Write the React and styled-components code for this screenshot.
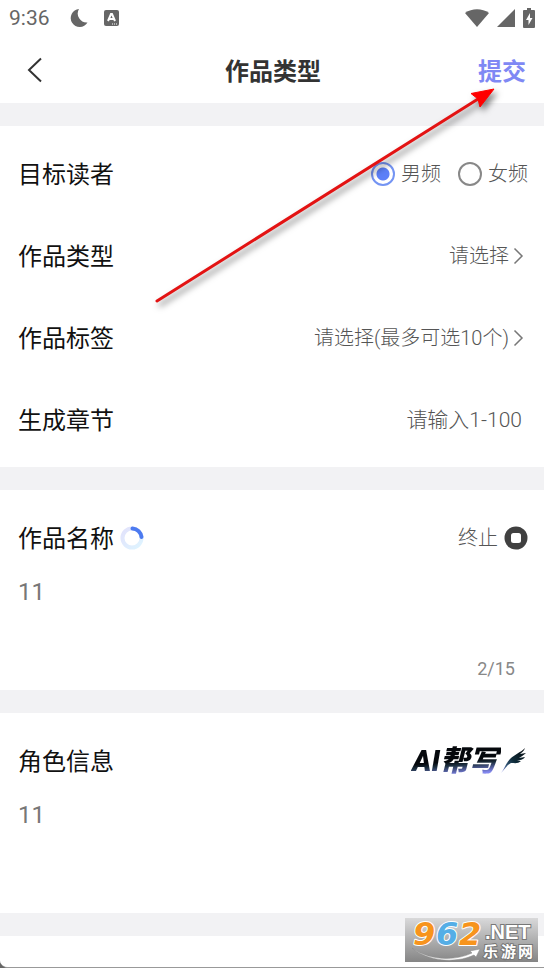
import React, { useState } from 'react';
import styled, { createGlobalStyle } from 'styled-components';

const GlobalStyle = createGlobalStyle`
  * {
    box-sizing: border-box;
  }

  body {
    margin: 0;
    background-color: #666;
    font-family: Roboto, 'Noto Sans CJK SC', sans-serif;
  }

  button, input, select, textarea {
    font-family: inherit;
    margin: 0;
    padding: 0;
    border: none;
    background: none;
    outline: none;
  }
`;

const Page = styled.div`
  position: relative;
  display: flex;
  flex-direction: column;
  min-height: 100vh;
  background-color: #f2f2f4;
  border-bottom: 1px solid #999;
  border-bottom-left-radius: 8px;
  overflow: hidden;
`;

const StatusBar = styled.div`
  display: flex;
  align-items: center;
  justify-content: space-between;
  height: 36px;
  padding: 0 9px;
  background-color: white;
  color: #666;
`;

const StatusGroup = styled.div`
  display: flex;
  align-items: center;
  gap: ${(props) => props.$gap}px;
`;

const Time = styled.span`
  font-size: 21px;
  line-height: 24px;
  margin-right: 4px;
`;

const NavBar = styled.header`
  display: grid;
  grid-template-columns: 1fr auto 1fr;
  align-items: center;
  height: 67px;
  padding: 0 18px 0 20px;
  background-color: white;
`;

const BackButton = styled.button`
  display: flex;
  justify-self: start;
  cursor: pointer;
`;

const Title = styled.h1`
  margin: 0;
  padding-top: 4px;
  font-size: 24px;
  line-height: 36px;
  font-weight: 700;
  color: #333;
`;

const SubmitButton = styled.button`
  justify-self: end;
  padding-top: 4px;
  font-size: 24px;
  line-height: 36px;
  font-weight: 700;
  color: #7f88f4;
  cursor: pointer;
`;

const Main = styled.main`
  display: flex;
  flex-direction: column;
  flex: 1;
  gap: 23px;
  padding-top: 23px;
`;

const Section = styled.section`
  padding: 7px 16px 6px 18px;
  background-color: white;
`;

const LastSection = styled(Section)`
  flex: 1;
`;

const Row = styled.div`
  display: flex;
  align-items: center;
  justify-content: space-between;
  height: 82px;
`;

const Label = styled.label`
  padding-top: 2px;
  font-size: 24px;
  line-height: 36px;
  color: #111;
`;

const LabelGroup = styled.div`
  display: flex;
  align-items: center;
  gap: 6px;
`;

const RadioGroup = styled.div`
  display: flex;
  gap: 17px;
`;

const RadioLabel = styled.label`
  display: flex;
  align-items: center;
  gap: 6px;
  font-size: 20px;
  line-height: 30px;
  font-weight: 300;
  color: #555;
`;

const Radio = styled.input`
  appearance: none;
  width: 24px;
  height: 24px;
  border: 2px solid #888;
  border-radius: 50%;

  &:checked {
    border-color: #7494f3;
    background: radial-gradient(circle closest-side, #5c80f8 6px, transparent 7px);
  }
`;

const SelectWrap = styled.div`
  display: flex;
  align-items: center;
  gap: 4px;
  padding-right: 4px;
  color: #555;
`;

const Select = styled.select`
  appearance: none;
  field-sizing: content;
  font-size: 20px;
  line-height: 30px;
  font-weight: 300;
  color: inherit;
  text-align: right;
`;

const ChapterInput = styled.input`
  flex: 1;
  min-width: 0;
  padding-right: 6px;
  font-size: 21px;
  line-height: 30px;
  font-weight: 300;
  text-align: right;
  color: #555;

  &::placeholder {
    color: #555;
  }
`;

const StopButton = styled.button`
  display: flex;
  align-items: center;
  gap: 6px;
  font-size: 20px;
  line-height: 30px;
  font-weight: 300;
  color: #555;
  cursor: pointer;
`;

const TextArea = styled.textarea`
  display: block;
  width: 100%;
  height: ${(props) => props.$height}px;
  font-size: 24px;
  line-height: 26px;
  color: #777;
  resize: none;
`;

const Counter = styled.div`
  padding: 1px 13px 2px 0;
  font-size: 18px;
  line-height: 26px;
  text-align: right;
  color: #888;
`;

const AiButton = styled.button`
  display: flex;
  align-items: center;
  padding-right: 2px;
  cursor: pointer;
`;

const AiText = styled.span`
  padding: 0 3px 0 1px;
  font-size: 29px;
  line-height: 36px;
  font-weight: 900;
  font-style: italic;
  background: linear-gradient(175deg, #05080c 50%, #1d3040 60%, #8488f0 82%);
  background-clip: text;
  color: transparent;
`;

const ArrowOverlay = styled.svg`
  position: absolute;
  top: 80px;
  right: 34px;
  pointer-events: none;
  filter: drop-shadow(3px 4px 3px rgba(0, 0, 0, 0.5));
`;

const Watermark = styled.div`
  position: absolute;
  right: 6px;
  bottom: 5px;
  display: flex;
  width: 133px;
  height: 44px;
  background: linear-gradient(#d9d9da, #858585);

  svg {
    overflow: visible;
  }
`;

function MoonIcon() {
  return (
    <svg width="20" height="20" viewBox="0 0 20 20">
      <path d="M10 1A9 9 0 1 0 18.500 14.500A9 9 0 0 1 10 1Z" fill="currentColor" />
    </svg>
  );
}

function KeyboardIcon() {
  return (
    <svg width="15" height="16" viewBox="0 0 15 16">
      <rect width="15" height="16" rx="2" fill="currentColor" />
      <path d="M4 11L7 4H8L11 11M5 9H10" fill="none" stroke="white" strokeWidth="2" />
      <path d="M8 14H14" stroke="white" strokeWidth="1" strokeDasharray="1 1" />
    </svg>
  );
}

function WifiIcon() {
  return (
    <svg width="24" height="18" viewBox="0 0 24 18">
      <path d="M0 4C7 -1 17 -1 24 4L12 18Z" fill="currentColor" />
    </svg>
  );
}

function SignalIcon() {
  return (
    <svg width="18" height="18" viewBox="0 0 18 18">
      <path d="M0 18L18 0V18Z" fill="currentColor" />
    </svg>
  );
}

function BatteryIcon() {
  return (
    <svg width="12" height="20" viewBox="0 0 12 20">
      <path d="M1 2H4V0H8V2H11Q12 2 12 3V19Q12 20 11 20H1Q0 20 0 19V3Q0 2 1 2Z" fill="currentColor" />
      <path d="M7 5L3 12H5.500V17L9.500 10H7Z" fill="white" />
    </svg>
  );
}

function BackIcon() {
  return (
    <svg width="24" height="26" viewBox="0 0 24 26" fill="none" stroke="#333" strokeWidth="2">
      <path d="M21 1.500L9 13L21 24.500" />
    </svg>
  );
}

function ChevronIcon() {
  return (
    <svg width="11" height="18" viewBox="0 0 11 18" fill="none" stroke="#777" strokeWidth="1.500">
      <path d="M1.500 1.500L9 9L1.500 16.500" />
    </svg>
  );
}

function Spinner() {
  return (
    <svg width="24" height="24" viewBox="0 0 24 24" fill="none" strokeWidth="4">
      <defs>
        <linearGradient id="ring" x1="0" y1="0" x2="1" y2="1">
          <stop offset="0" stopColor="#e2e2fb" />
          <stop offset="1" stopColor="#def4ff" />
        </linearGradient>
      </defs>
      <circle cx="12" cy="12" r="9.500" stroke="url(#ring)" />
      <path d="M12.500 2.500A9.500 9.500 0 0 1 21.500 11" stroke="#4c7af0" strokeLinecap="round" />
    </svg>
  );
}

function StopIcon() {
  return (
    <svg width="24" height="24" viewBox="0 0 24 24">
      <circle cx="12" cy="12" r="11.500" fill="#404040" />
      <rect x="7" y="7" width="10" height="10" rx="2.500" fill="white" />
    </svg>
  );
}

function FeatherIcon() {
  return (
    <svg width="25" height="28" viewBox="0 0 25 28">
      <defs>
        <linearGradient id="feather" x1="1" y1="0" x2="0" y2="1">
          <stop offset="0" stopColor="#05080c" />
          <stop offset="0.500" stopColor="#0f2c3a" />
          <stop offset="0.750" stopColor="#35587a" />
          <stop offset="1" stopColor="#8b90f5" />
        </linearGradient>
      </defs>
      <path
        d="M0 26C4 21 5 16 9 12C14 7 19 6 24 1C23 4 21 5 19 7L25 6C23 8 21 9 18 11L24 10C22 13 19 13 16 14L20 14C17 17 14 16 10 16C6 18 4 22 0 26Z"
        fill="url(#feather)"
      />
    </svg>
  );
}

function Arrow() {
  return (
    <ArrowOverlay width="370" height="240" viewBox="0 0 370 240" aria-hidden="true">
      <path d="M17 221L338 19" stroke="#e31313" strokeWidth="3" strokeLinecap="round" />
      <path d="M354 9L331 13.500L338 19L340 27Z" fill="#ff0000" stroke="#ff0000" />
    </ArrowOverlay>
  );
}

function SiteMark() {
  return (
    <Watermark>
      <svg width="133" height="44" viewBox="0 0 133 44" fontFamily="'Liberation Sans', 'Noto Sans CJK SC', sans-serif" fontWeight="700">
        <g
          fontFamily="'DejaVu Sans', sans-serif"
          fontSize="32"
          fontStyle="italic"
          stroke="white"
          strokeWidth="2"
          paintOrder="stroke"
          strokeLinejoin="round"
        >
          <text x="8" y="27" fill="#f7941d">9</text>
          <text x="31" y="27" fill="#55aee6">6</text>
          <text x="54" y="27" fill="#f7941d">2</text>
        </g>
        <path d="M7 30C25 43 50 43 67 35L65 33L75 31L71 39L69 37C50 46 22 43 7 30Z" fill="white" stroke="#888" strokeWidth="0.500" />
        <g fill="white" stroke="#777" strokeWidth="2" paintOrder="stroke">
          <text x="80" y="21" fontSize="20">.NET</text>
          <text x="78" y="39" fontSize="15">乐</text>
          <text x="96" y="39" fontSize="15">游</text>
          <text x="113" y="39" fontSize="15">网</text>
        </g>
      </svg>
    </Watermark>
  );
}

function App() {
  const [channel, setChannel] = useState('male');
  const [name, setName] = useState('11');
  const [role, setRole] = useState('11');

  return (
    <>
      <GlobalStyle />
      <Page>
        <StatusBar>
          <StatusGroup $gap={15}>
            <Time>9:36</Time>
            <MoonIcon />
            <KeyboardIcon />
          </StatusGroup>
          <StatusGroup $gap={8}>
            <WifiIcon />
            <SignalIcon />
            <BatteryIcon />
          </StatusGroup>
        </StatusBar>
        <NavBar>
          <BackButton aria-label="返回">
            <BackIcon />
          </BackButton>
          <Title>作品类型</Title>
          <SubmitButton>提交</SubmitButton>
        </NavBar>

        <Main>
          <Section>
            <Row>
              <Label as="span" id="reader">目标读者</Label>
              <RadioGroup role="radiogroup" aria-labelledby="reader">
                <RadioLabel>
                  <Radio
                    type="radio"
                    name="channel"
                    checked={channel === 'male'}
                    onChange={() => setChannel('male')}
                  />
                  男频
                </RadioLabel>
                <RadioLabel>
                  <Radio
                    type="radio"
                    name="channel"
                    checked={channel === 'female'}
                    onChange={() => setChannel('female')}
                  />
                  女频
                </RadioLabel>
              </RadioGroup>
            </Row>
            <Row>
              <Label htmlFor="type">作品类型</Label>
              <SelectWrap>
                <Select id="type">
                  <option>请选择</option>
                </Select>
                <ChevronIcon />
              </SelectWrap>
            </Row>
            <Row>
              <Label htmlFor="tags">作品标签</Label>
              <SelectWrap>
                <Select id="tags">
                  <option>请选择(最多可选10个)</option>
                </Select>
                <ChevronIcon />
              </SelectWrap>
            </Row>
            <Row>
              <Label htmlFor="chapters">生成章节</Label>
              <ChapterInput id="chapters" placeholder="请输入1-100" />
            </Row>
          </Section>

          <Section>
            <Row>
              <LabelGroup>
                <Label htmlFor="name">作品名称</Label>
                <Spinner />
              </LabelGroup>
              <StopButton>
                终止
                <StopIcon />
              </StopButton>
            </Row>
            <TextArea
              id="name"
              $height={76}
              maxLength={15}
              value={name}
              onChange={(e) => setName(e.target.value)}
            />
            <Counter>{name.length}/15</Counter>
          </Section>

          <Section>
            <Row>
              <Label htmlFor="role">角色信息</Label>
              <AiButton>
                <AiText>AI帮写</AiText>
                <FeatherIcon />
              </AiButton>
            </Row>
            <TextArea
              id="role"
              $height={105}
              value={role}
              onChange={(e) => setRole(e.target.value)}
            />
          </Section>

          <LastSection />
        </Main>

        <Arrow />
        <SiteMark />
      </Page>
    </>
  );
}

export default App;
